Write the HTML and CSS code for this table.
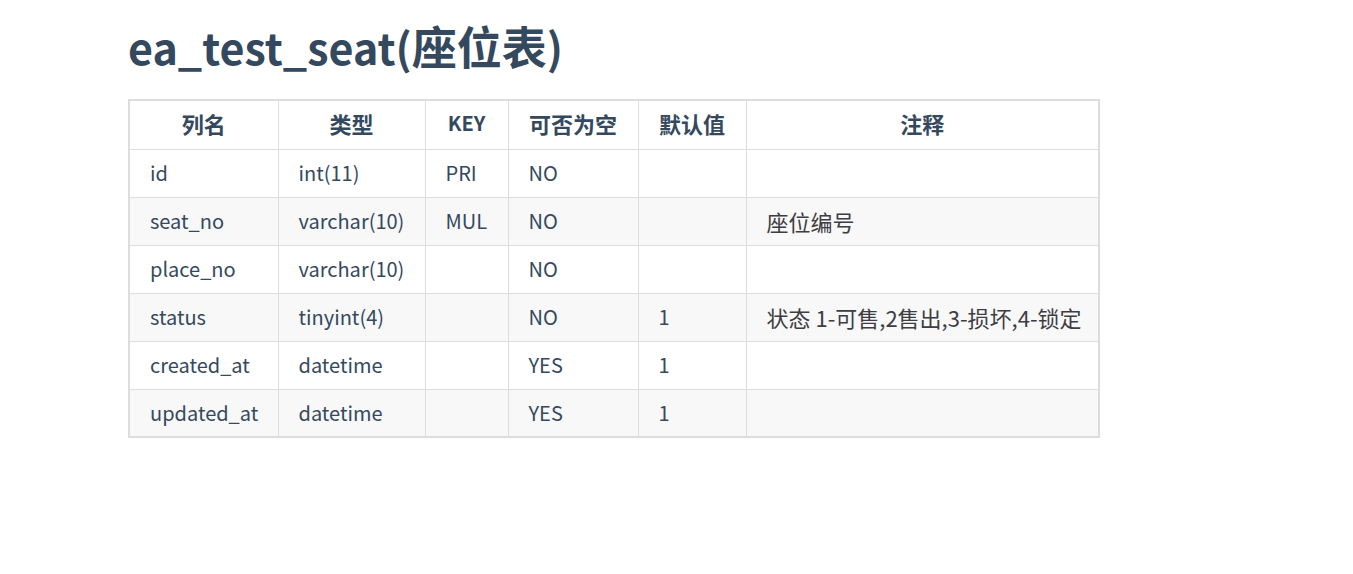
FILE: index.html
```html
<!DOCTYPE html>
<html lang="zh-CN">
<head>
<meta charset="utf-8">
<title>ea_test_seat</title>
<link rel="stylesheet" href="styles.css">
</head>
<body>
<main class="content">
  <h1 class="title">ea_test_seat(<span class="cjk">座位表</span>)</h1>
  <table class="schema">
    <colgroup>
      <col class="c1"><col class="c2"><col class="c3"><col class="c4"><col class="c5"><col class="c6">
    </colgroup>
    <thead>
      <tr><th>列名</th><th>类型</th><th class="latin">KEY</th><th>可否为空</th><th>默认值</th><th>注释</th></tr>
    </thead>
    <tbody>
      <tr><td>id</td><td>int(11)</td><td>PRI</td><td>NO</td><td></td><td></td></tr>
      <tr><td>seat_no</td><td>varchar(10)</td><td>MUL</td><td>NO</td><td></td><td class="note">座位编号</td></tr>
      <tr><td>place_no</td><td>varchar(10)</td><td></td><td>NO</td><td></td><td></td></tr>
      <tr><td>status</td><td>tinyint(4)</td><td></td><td>NO</td><td>1</td><td class="note">状态 1-可售,2售出,3-损坏,4-锁定</td></tr>
      <tr><td>created_at</td><td>datetime</td><td></td><td>YES</td><td>1</td><td></td></tr>
      <tr><td>updated_at</td><td>datetime</td><td></td><td>YES</td><td>1</td><td></td></tr>
    </tbody>
  </table>
</main>
</body>
</html>
```

FILE: styles.css
```css
html, body {
  margin: 0;
  padding: 0;
  background: #fff;
}
body {
  font-family: "Noto Sans CJK SC", "Noto Sans", sans-serif;
  color: #34495e;
}
.content {
  padding: 18px 0 0 128px;
}
.title {
  margin: 0 0 25px 0;
  font-size: 43px;
  font-weight: 700;
  line-height: 56px;
}
.title .cjk {
  font-size: 45px;
}
.schema {
  border-collapse: collapse;
  table-layout: fixed;
  width: 972px;
  border: 2px solid #dddddd;
  font-size: 20px;
}
.c1 { width: 149px; }
.c2 { width: 147px; }
.c3 { width: 83px; }
.c4 { width: 130px; }
.c5 { width: 108px; }
.c6 { width: 353px; }
.schema th, .schema td {
  border: 1px solid #dddddd;
  height: 48px;
  padding: 0 20px;
  box-sizing: border-box;
  line-height: 30px;
  white-space: nowrap;
  text-align: left;
}
.schema th {
  font-weight: 700;
  font-size: 22px;
  text-align: center;
  height: 49px;
  padding-bottom: 3px;
}
.schema th.latin {
  font-size: 20px;
  font-weight: 600;
}
.schema tbody tr:nth-child(even) {
  background: #f8f8f8;
}
.schema td.note {
  color: #3d3d44;
  font-size: 22px;
}
```
